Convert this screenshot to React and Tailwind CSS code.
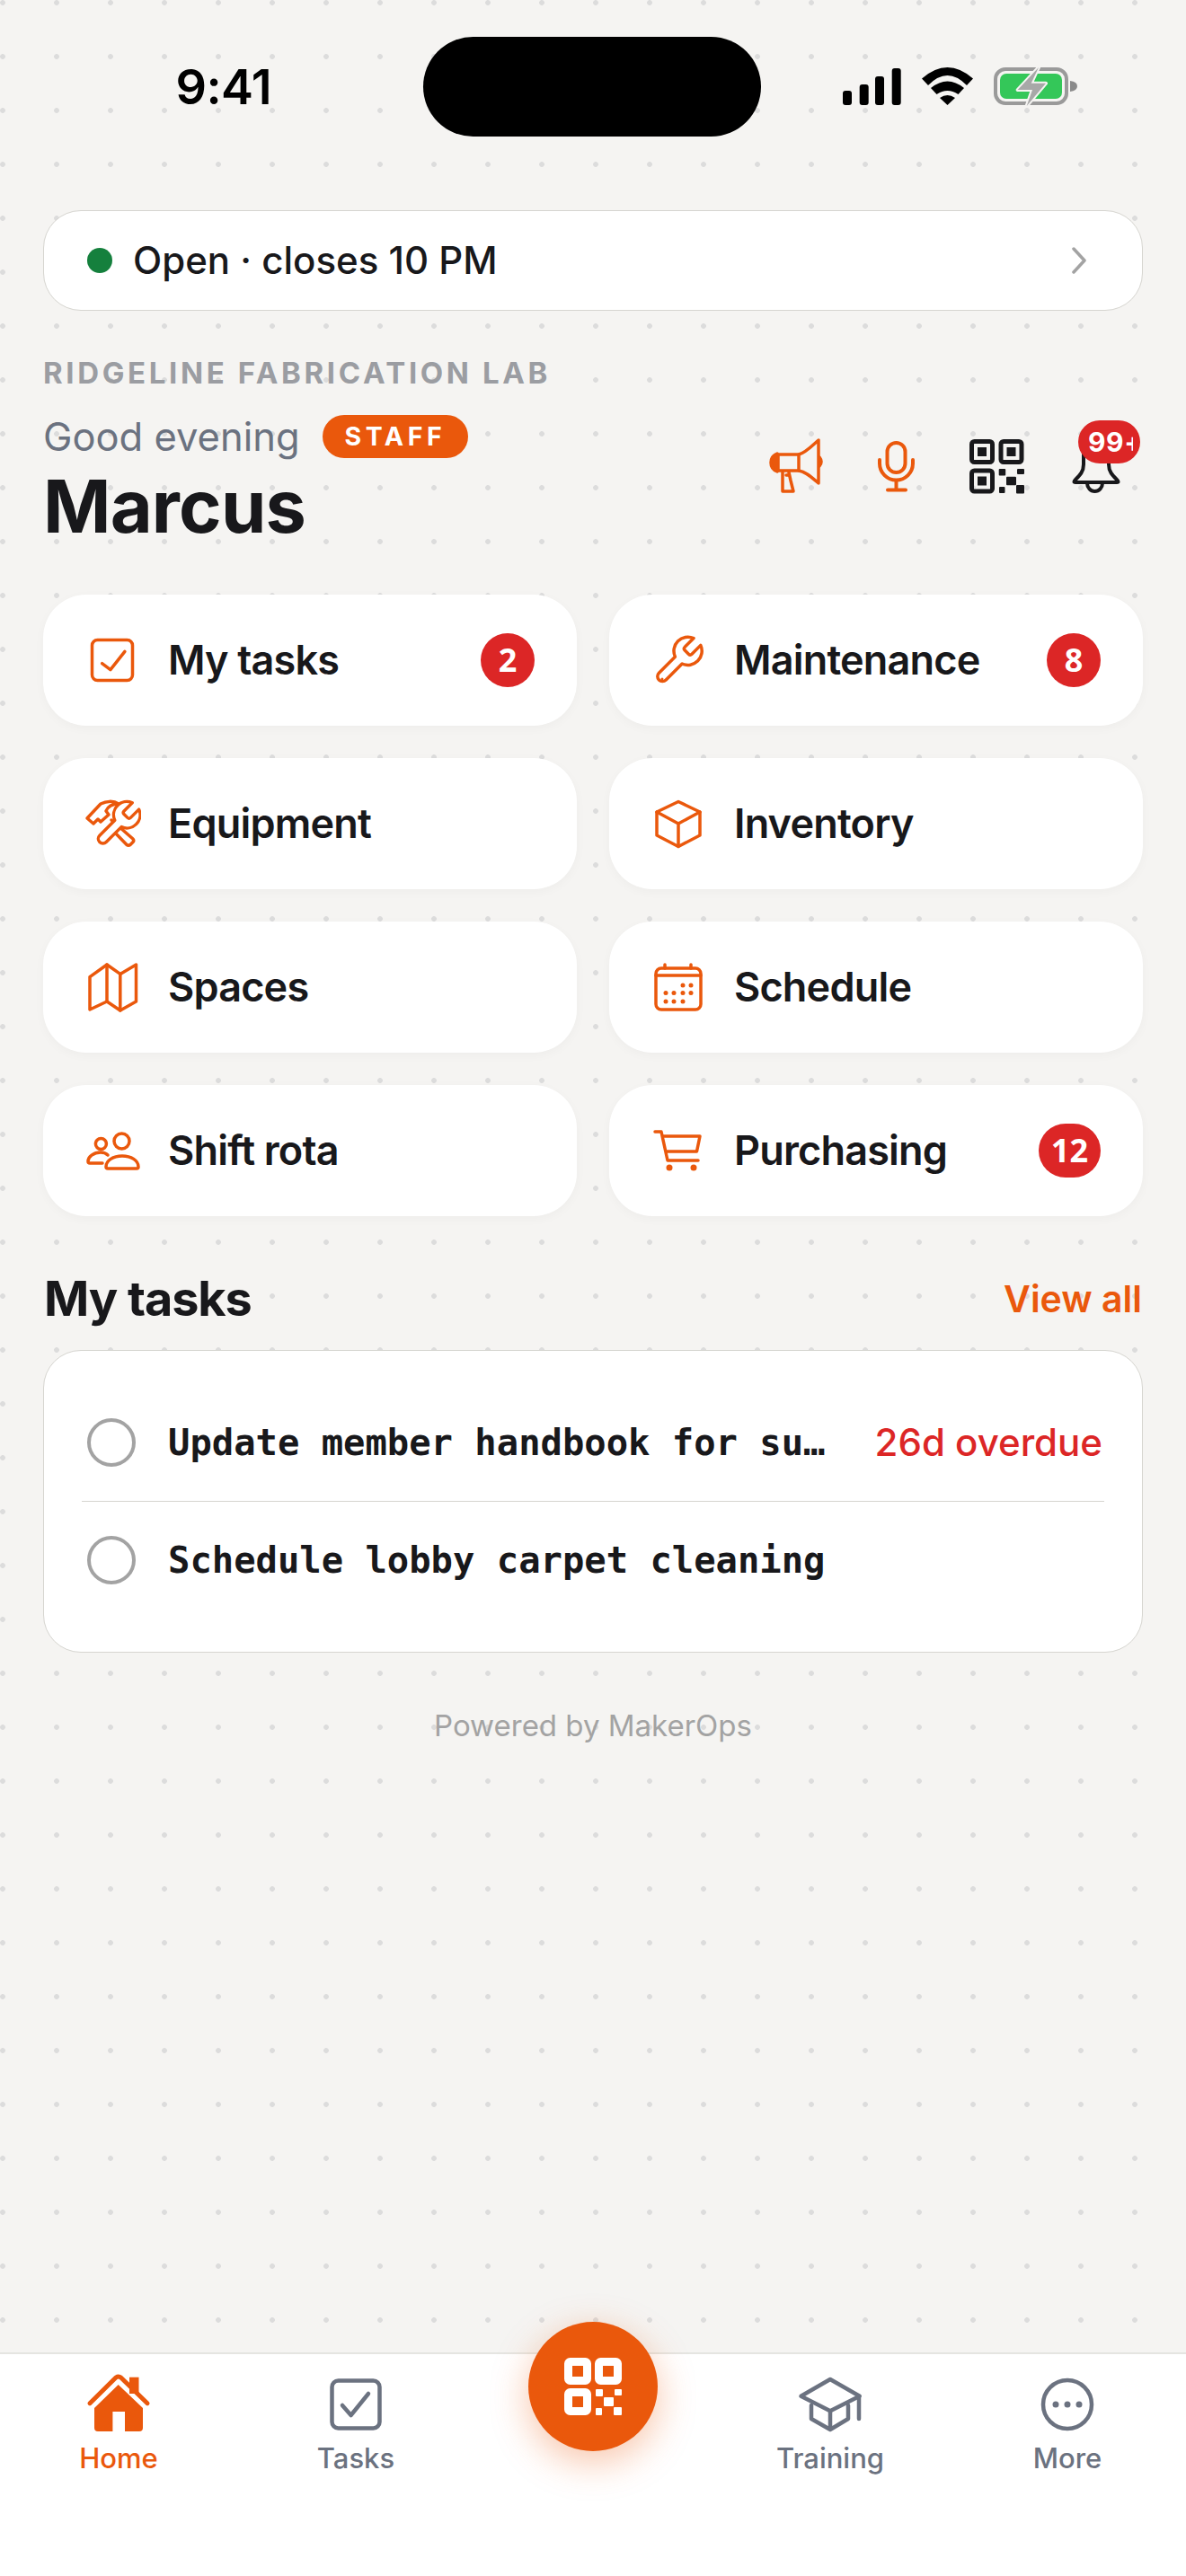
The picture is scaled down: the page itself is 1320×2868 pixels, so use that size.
import React from "react";

const O = "#ea580c";
const G = "#6b7280";
const K = "#18181b";

function TileIcon({ children }) {
  return (
    <svg viewBox="0 0 64 64" fill="none" stroke={O} strokeWidth="3.5" strokeLinecap="round" strokeLinejoin="round" className="w-[64px] h-[64px] shrink-0">
      {children}
    </svg>
  );
}

const WRENCH = "M14.7 6.3a1 1 0 0 0 0 1.4l1.6 1.6a1 1 0 0 0 1.4 0l3.77-3.77a6 6 0 0 1-7.94 7.94l-6.91 6.91a2.12 2.12 0 0 1-3-3l6.91-6.91a6 6 0 0 1 7.94-7.94l-3.76 3.76z";

const IconCheck = () => (
  <TileIcon>
    <rect x="9.5" y="9.5" width="45" height="45" rx="6" />
    <path d="M20.6 35.7l9.3 6.9 16-20.2" />
  </TileIcon>
);
const IconWrench = () => (
  <TileIcon>
    <path d={WRENCH} transform="translate(1 1) scale(2.6)" strokeWidth="1.35" />
    <circle cx="14" cy="53" r="1.5" fill={O} stroke="none" />
  </TileIcon>
);
const IconTools = () => (
  <TileIcon>
    <path d="M4 26l7 6 5-5 3 3 9-8-3-4c2-5 7-8 14-8-6-4-14-3-20 0z" />
    <path d="M31 28l24 21q1.500 2 0 3.500l-3 3q-2 1.500-4 0L34 41" />
    <path d={WRENCH} transform="translate(9 2.600) scale(2.450)" strokeWidth="1.400" fill="#fff" />
  </TileIcon>
);
const IconMap = () => (
  <TileIcon>
    <path d="M7 20.600L26 7l14.800 10.400L58.500 7v41l-17.700 10L26 48 7 57z" />
    <path d="M26 7v41M40.800 17.400V58" />
  </TileIcon>
);
const IconBox = () => (
  <TileIcon>
    <path d="M32 7.500L56 19v26L32 57.500 8 45V19z" />
    <path d="M8 19l24 13 24-13M32 32v25.500" />
  </TileIcon>
);
const IconCalendar = () => (
  <TileIcon>
    <rect x="7" y="11" width="50" height="46" rx="6" />
    <path d="M7 19h50M17 7v4M46 7v4" />
    <g fill={O} stroke="none">
      {[[37, 30], [46, 30], [18, 38.500], [27, 38.500], [37, 38.500], [46, 38.500], [18, 48], [27, 48], [37, 48]].map(([x, y]) => (
        <circle key={x + "-" + y} cx={x} cy={y} r="2.500" />
      ))}
    </g>
  </TileIcon>
);
const IconPeople = () => (
  <TileIcon>
    <circle cx="19.400" cy="24.600" r="6" />
    <circle cx="42.500" cy="21.400" r="8.500" />
    <path d="M25 50c0-7 8-12 18-12s18 5 18 12q0 2-2 2H27q-2 0-2-2z" />
    <path d="M27 37c-2-2-5-3-8-3-8 0-14 5-14 10q0 2 2 2h14" />
  </TileIcon>
);
const IconCart = () => (
  <TileIcon>
    <path d="M6 11h7l7 32h34" />
    <path d="M15 16h41l-3.500 17H19" />
    <circle cx="22" cy="51" r="3.500" fill={O} stroke="none" />
    <circle cx="49" cy="51" r="3.500" fill={O} stroke="none" />
  </TileIcon>
);

const IconMegaphone = () => (
  <svg viewBox="0 0 64 64" fill="none" stroke={O} strokeWidth="3.500" strokeLinecap="round" strokeLinejoin="round" className="w-[64px] h-[64px]">
    <path d="M11 19H34C42 17 49 9 56 3V51C49 45 42 38 34 37H11z" />
    <path d="M34 19V37" />
    <path d="M10 18C5 20 3 24 3 28s2 8 7 10z" fill={O} />
    <path d="M16 39V60H28L25 48l-2-9" />
    <path d="M23 42h-3" />
    <path d="M57 22q4 5 0 10z" fill={O} />
  </svg>
);
const IconMic = () => (
  <svg viewBox="0 0 64 64" fill="none" stroke={O} strokeWidth="4" strokeLinecap="round" strokeLinejoin="round" className="w-[64px] h-[64px]">
    <rect x="21.500" y="6" width="20" height="33" rx="10" />
    <path d="M13 25v4a18.500 18.500 0 0 0 37 0v-4" />
    <path d="M31.500 48v10M22 58.500h20" />
  </svg>
);
const IconQr = () => (
  <svg viewBox="0 0 61 61" fill={K} className="w-[61px] h-[61px] m-[1.5px]">
    {[[2.500, 2.500], [35, 2.500], [2.500, 35]].map(([x, y]) => (
      <g key={x + "-" + y}>
        <rect x={x} y={y} width="23" height="23" rx="3" fill="none" stroke={K} strokeWidth="5" />
        <rect x={x + 6.500} y={y + 6.500} width="10" height="10" />
      </g>
    ))}
    <rect x="32.700" y="33" width="7.500" height="7.500" rx="1" />
    <rect x="53" y="33" width="8" height="6" rx="1" />
    <rect x="41" y="41.700" width="11" height="9.500" rx="1" />
    <rect x="33" y="53" width="6.500" height="7" rx="1" />
    <rect x="52" y="51" width="9" height="9.500" rx="1" />
  </svg>
);
const IconBell = () => (
  <svg viewBox="0 0 64 64" fill="none" stroke={K} strokeWidth="4" strokeLinecap="round" strokeLinejoin="round" className="w-[64px] h-[64px]">
    <path d="M18 16V30C18 38 14 42 9 47Q6 50 9 50H55Q58 50 55 47C50 42 46 38 46 30V16a14 14 0 0 0-28 0z" />
    <path d="M22 51a8.500 9 0 0 0 17 0" />
  </svg>
);

const TabIcon = ({ children }) => (
  <svg viewBox="0 0 72 72" fill="none" stroke={G} strokeWidth="4.500" strokeLinecap="round" strokeLinejoin="round" className="w-[72px] h-[72px]">
    {children}
  </svg>
);

const tiles = [
  ["My tasks", <IconCheck />, "2"],
  ["Maintenance", <IconWrench />, "8"],
  ["Equipment", <IconTools />],
  ["Inventory", <IconBox />],
  ["Spaces", <IconMap />],
  ["Schedule", <IconCalendar />],
  ["Shift rota", <IconPeople />],
  ["Purchasing", <IconCart />, "12"],
];

function Tile({ label, icon, count }) {
  return (
    <div className="h-[146px] rounded-[48px] bg-white shadow-[0_3px_12px_rgba(0,0,0,0.03)] flex items-center pl-[45px] pr-[47px] gap-[30px]">
      {icon}
      <span className="flex-1 text-[45px] leading-[60px] font-semibold tracking-[-0.018em] text-[#18181b]">{label}</span>
      {count && (
        <span className="h-[60px] min-w-[60px] px-[14px] rounded-full bg-[#dc2626] text-white flex items-center justify-center font-['Noto_Sans',sans-serif] font-bold text-[36px] leading-none">
          {count}
        </span>
      )}
    </div>
  );
}

function Tab({ label, active, children }) {
  return (
    <div className="flex flex-col items-center pt-[20px]">
      {children}
      <span className={"mt-[2px] text-[31px] leading-[44px] font-medium " + (active ? "text-[#ea580c]" : "text-[#6b7280]")}>{label}</span>
    </div>
  );
}

function TaskRow({ title, due }) {
  return (
    <div className="h-[130px] flex items-center pl-[6px] pr-[2px]">
      <span className="w-[54px] h-[54px] rounded-full border-[4px] border-[#a3a3a3] shrink-0" />
      <span className="ml-[36px] flex-1 whitespace-nowrap font-['DejaVu_Sans_Mono',monospace] font-bold text-[40.5px] leading-[56px] text-[#18181b]">{title}</span>
      {due && <span className="text-[42px] leading-[56px] font-medium text-[#dc2626]">{due}</span>}
    </div>
  );
}

export default function App() {
  return (
    <div className="w-[1320px] h-[2868px] overflow-hidden flex flex-col font-['Inter',sans-serif] bg-[#f5f4f2] bg-[radial-gradient(circle,#dcdcdc_2.5px,transparent_3.2px)] bg-[size:60px_60px] bg-[position:-27px_-27px]">
      <header className="h-[234px] shrink-0 flex items-start pt-[41px]">
        <div className="flex-1 flex justify-center pl-[27px] pt-[26px]">
          <span className="text-[54px] leading-[60px] font-semibold tracking-[-0.01em] text-black">9:41</span>
        </div>
        <div className="w-[376px] h-[111px] rounded-full bg-black" />
        <div className="flex-1 flex justify-center pr-[30px] pt-[34px] gap-[23px]">
          <svg viewBox="0 0 65 41" fill="#000" className="w-[65px] h-[41px] mt-[1px]">
            <rect x="0" y="25" width="10" height="16" rx="3" />
            <rect x="18.700" y="18" width="10" height="23" rx="3" />
            <rect x="36" y="9" width="10" height="32" rx="3" />
            <rect x="54.700" y="0" width="10" height="41" rx="3" />
          </svg>
          <svg viewBox="0 0 57 42" fill="#000" className="w-[57px] h-[42px]">
            <path d="M0 12.500Q28.500-12.500 57 12.500L50 20Q28.500-2 7 20Z" />
            <path d="M10 23Q28.500 8 47 23L40.500 30Q28.500 22 16.500 30Z" />
            <path d="M20 34Q28.500 28 37 34L28.500 42Z" />
          </svg>
          <svg viewBox="0 0 93 43" className="w-[93px] h-[43px]">
            <rect x="2" y="2" width="79" height="38" rx="11" fill="none" stroke="#9a9a9a" strokeWidth="4" />
            <rect x="7" y="7" width="69" height="28" rx="7" fill="#34c759" />
            <path d="M85 15q8 1 8 6t-8 6z" fill="#8a8a8a" />
            <path d="M50 0L26.700 25H43L36.700 43L58 17.700H41.700z" fill="#a8a8a8" stroke="#f5f4f2" strokeWidth="4" strokeLinejoin="round" paintOrder="stroke" />
          </svg>
        </div>
      </header>

      <main className="px-[48px] flex flex-col shrink-0">
        <div className="h-[112px] rounded-[42px] bg-white border-[1.5px] border-[#d6d5d0] flex items-center pl-[48px] pr-[62px]">
          <span className="w-[28px] h-[28px] rounded-full bg-[#15803d]" />
          <span className="ml-[23px] flex-1 text-[42px] leading-[56px] font-medium text-[#18181b]">Open · closes 10 PM</span>
          <svg viewBox="0 0 16 30" fill="none" stroke="#a3a3a3" strokeWidth="3.500" strokeLinecap="round" strokeLinejoin="round" className="w-[16px] h-[30px]">
            <path d="M2 2l12 13L2 28" />
          </svg>
        </div>

        <div className="mt-[51px] h-[36px] text-[33px] leading-[36px] font-bold tracking-[0.11em] text-[#9b9da2] whitespace-nowrap">RIDGELINE FABRICATION LAB</div>

        <div className="mt-[29px] flex justify-between items-start">
          <div className="flex flex-col">
            <div className="h-[48px] flex items-center">
              <span className="text-[43.5px] leading-[56px] text-[#6b7280]">Good evening</span>
              <span className="ml-[25px] h-[48px] px-[25px] rounded-full bg-[#ea580c] text-white font-bold text-[28.5px] tracking-[0.16em] leading-[48px]">STAFF</span>
            </div>
            <div className="mt-[12px] text-[81px] leading-[84px] font-bold tracking-[-0.01em] text-[#18181b]">Marcus</div>
          </div>
          <div className="relative mt-[25px] mr-[20px] flex gap-[47px]">
            <IconMegaphone />
            <IconMic />
            <IconQr />
            <IconBell />
            <span className="absolute left-[345px] top-[-19px] w-[69px] h-[48px] rounded-[24px] bg-[#dc2626] pl-[11px] pr-[8px] flex items-center">
              <span className="block w-full overflow-hidden whitespace-nowrap text-white font-bold text-[30px] leading-[36px] tracking-[0.02em]">99+</span>
            </span>
          </div>
        </div>

        <div className="mt-[56px] grid grid-cols-2 gap-[36px]">
          {tiles.map(([label, icon, count]) => (
            <Tile key={label} label={label} icon={icon} count={count} />
          ))}
        </div>

        <div className="mt-[62px] h-[60px] flex items-center justify-between pl-[1px] pr-[1px]">
          <span className="text-[54px] leading-[60px] font-bold tracking-[-0.02em] text-[#18181b]">My tasks</span>
          <span className="text-[41px] leading-[56px] font-semibold text-[#ea580c]">View all</span>
        </div>

        <div className="mt-[27px] h-[337px] rounded-[42px] bg-white border-[1.5px] border-[#d6d5d0] px-[42px] pt-[36.5px]">
          <TaskRow title="Update member handbook for su…" due="26d overdue" />
          <div className="h-[1.5px] bg-[#d6d5d0]" />
          <TaskRow title="Schedule lobby carpet cleaning" />
        </div>

        <div className="mt-[59px] h-[44px] text-center text-[33px] leading-[44px] text-[#a3a3a3]">Powered by MakerOps</div>
      </main>

      <nav className="mt-auto h-[249px] shrink-0 bg-white border-t-[2px] border-[#e5e5e1] grid grid-cols-5">
        <Tab label="Home" active>
          <svg viewBox="0 0 72 72" className="w-[72px] h-[72px]">
            <path d="M48 5.700h10.500V24H48z" fill={O} />
            <path d="M4 34.700L33 6q3-2 5.500 0L68 34.700" fill="none" stroke={O} strokeWidth="5" strokeLinecap="round" strokeLinejoin="round" />
            <path d="M35.700 14L63 40V62q0 4-4 4H43V44H29.400V66H13q-4 0-4-4V40z" fill={O} />
          </svg>
        </Tab>
        <Tab label="Tasks">
          <TabIcon>
            <rect x="9.500" y="9.500" width="53" height="53" rx="7" />
            <path d="M21 37l9.600 11L50 24" />
          </TabIcon>
        </Tab>
        <div className="flex justify-center">
          <div className="relative z-10 -mt-[36px] w-[144px] h-[144px] rounded-full bg-[#ea580c] shadow-[0_12px_42px_rgba(234,88,12,0.35)] flex items-center justify-center">
            <svg viewBox="0 0 64 64" fill="#fff" className="w-[64px] h-[64px]">
              {[[4.500, 4.500], [38.500, 4.500], [4.500, 38.500]].map(([x, y]) => (
                <rect key={x + "-" + y} x={x} y={y} width="21" height="21" rx="2" fill="none" stroke="#fff" strokeWidth="9" />
              ))}
              <rect x="35" y="35" width="8" height="8" rx="1" />
              <rect x="56" y="35" width="8" height="7" rx="1" />
              <rect x="44" y="44" width="11" height="10" rx="1" />
              <rect x="35" y="56" width="7" height="8" rx="1" />
              <rect x="55" y="55" width="9" height="9" rx="1" />
            </svg>
          </div>
        </div>
        <Tab label="Training">
          <TabIcon>
            <path d="M3.500 26.700L36 8l32.700 18.700L36 43.300z" />
            <path d="M15 37v15l21 12 20-12V37M36 43.300V64M68 27v25" />
          </TabIcon>
        </Tab>
        <Tab label="More">
          <TabIcon>
            <circle cx="36" cy="36" r="27" />
            <g fill={G} stroke="none">
              <circle cx="23" cy="36" r="3.500" />
              <circle cx="36" cy="36" r="3.500" />
              <circle cx="49" cy="36" r="3.500" />
            </g>
          </TabIcon>
        </Tab>
      </nav>
    </div>
  );
}
